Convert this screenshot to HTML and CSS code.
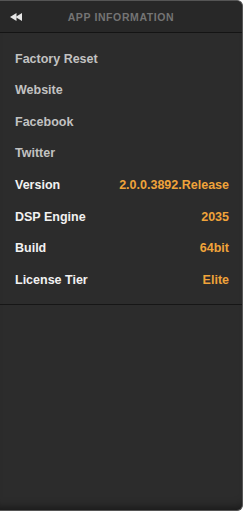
FILE: index.html
```html
<!DOCTYPE html>
<html lang="en">
<head>
    <meta charset="UTF-8">
    <meta name="viewport" content="width=device-width, initial-scale=1.0">
    <title>App Information</title>
    <link rel="stylesheet" href="styles.css">
</head>
<body>
    <div class="panel">
        <div class="panel-header">
            <span class="back-icon">
                <svg width="13" height="8" viewBox="0 0 13 8">
                    <polygon points="0,4 6.5,0 6.5,8" fill="#e6e6e6"/>
                    <polygon points="5.5,4 12,0 12,8" fill="#e6e6e6"/>
                </svg>
            </span>
            <h1 class="panel-title">App Information</h1>
        </div>

        <div class="info-list">
            <div class="info-row link">Factory Reset</div>
            <div class="info-row link">Website</div>
            <div class="info-row link">Facebook</div>
            <div class="info-row link">Twitter</div>
            <div class="info-row"><span class="label">Version</span><span class="value">2.0.0.3892.Release</span></div>
            <div class="info-row"><span class="label">DSP Engine</span><span class="value">2035</span></div>
            <div class="info-row"><span class="label">Build</span><span class="value">64bit</span></div>
            <div class="info-row"><span class="label">License Tier</span><span class="value">Elite</span></div>
        </div>
    </div>
</body>
</html>
```

FILE: styles.css
```css
html, body {
    margin: 0;
    height: 100%;
    background: #ffffff;
}
body {
    font-family: "Liberation Sans", Arial, sans-serif;
    font-weight: bold;
    font-size: 12.5px;
}
.panel {
    width: 242px;
    height: 509px;
    background-color: #2c2c2c;
    border: 1px solid #555;
    border-left: none;
    border-radius: 0 6px 6px 0;
    box-shadow: inset 0 -10px 10px -8px rgba(0,0,0,0.5);
}
.panel-header {
    position: relative;
    height: 31px;
    display: flex;
    align-items: center;
    justify-content: center;
    background-color: #282828;
    border-bottom: 1px solid #141414;
    border-radius: 0 6px 0 0;
}
.back-icon {
    position: absolute;
    left: 10px;
    top: 12px;
    line-height: 0;
}
.panel-title {
    margin: 0;
    font-size: 10.5px;
    letter-spacing: 0.6px;
    text-transform: uppercase;
    color: #747474;
}
.info-list {
    padding: 10px 13px 9px 15px;
    border-bottom: 1px solid #161616;
}
.info-row {
    height: 31.55px;
    display: flex;
    align-items: center;
    justify-content: space-between;
    color: #f2f2f2;
}
.info-row.link { color: #c2c2c2; }
.value { color: #f0a33a; }
```
